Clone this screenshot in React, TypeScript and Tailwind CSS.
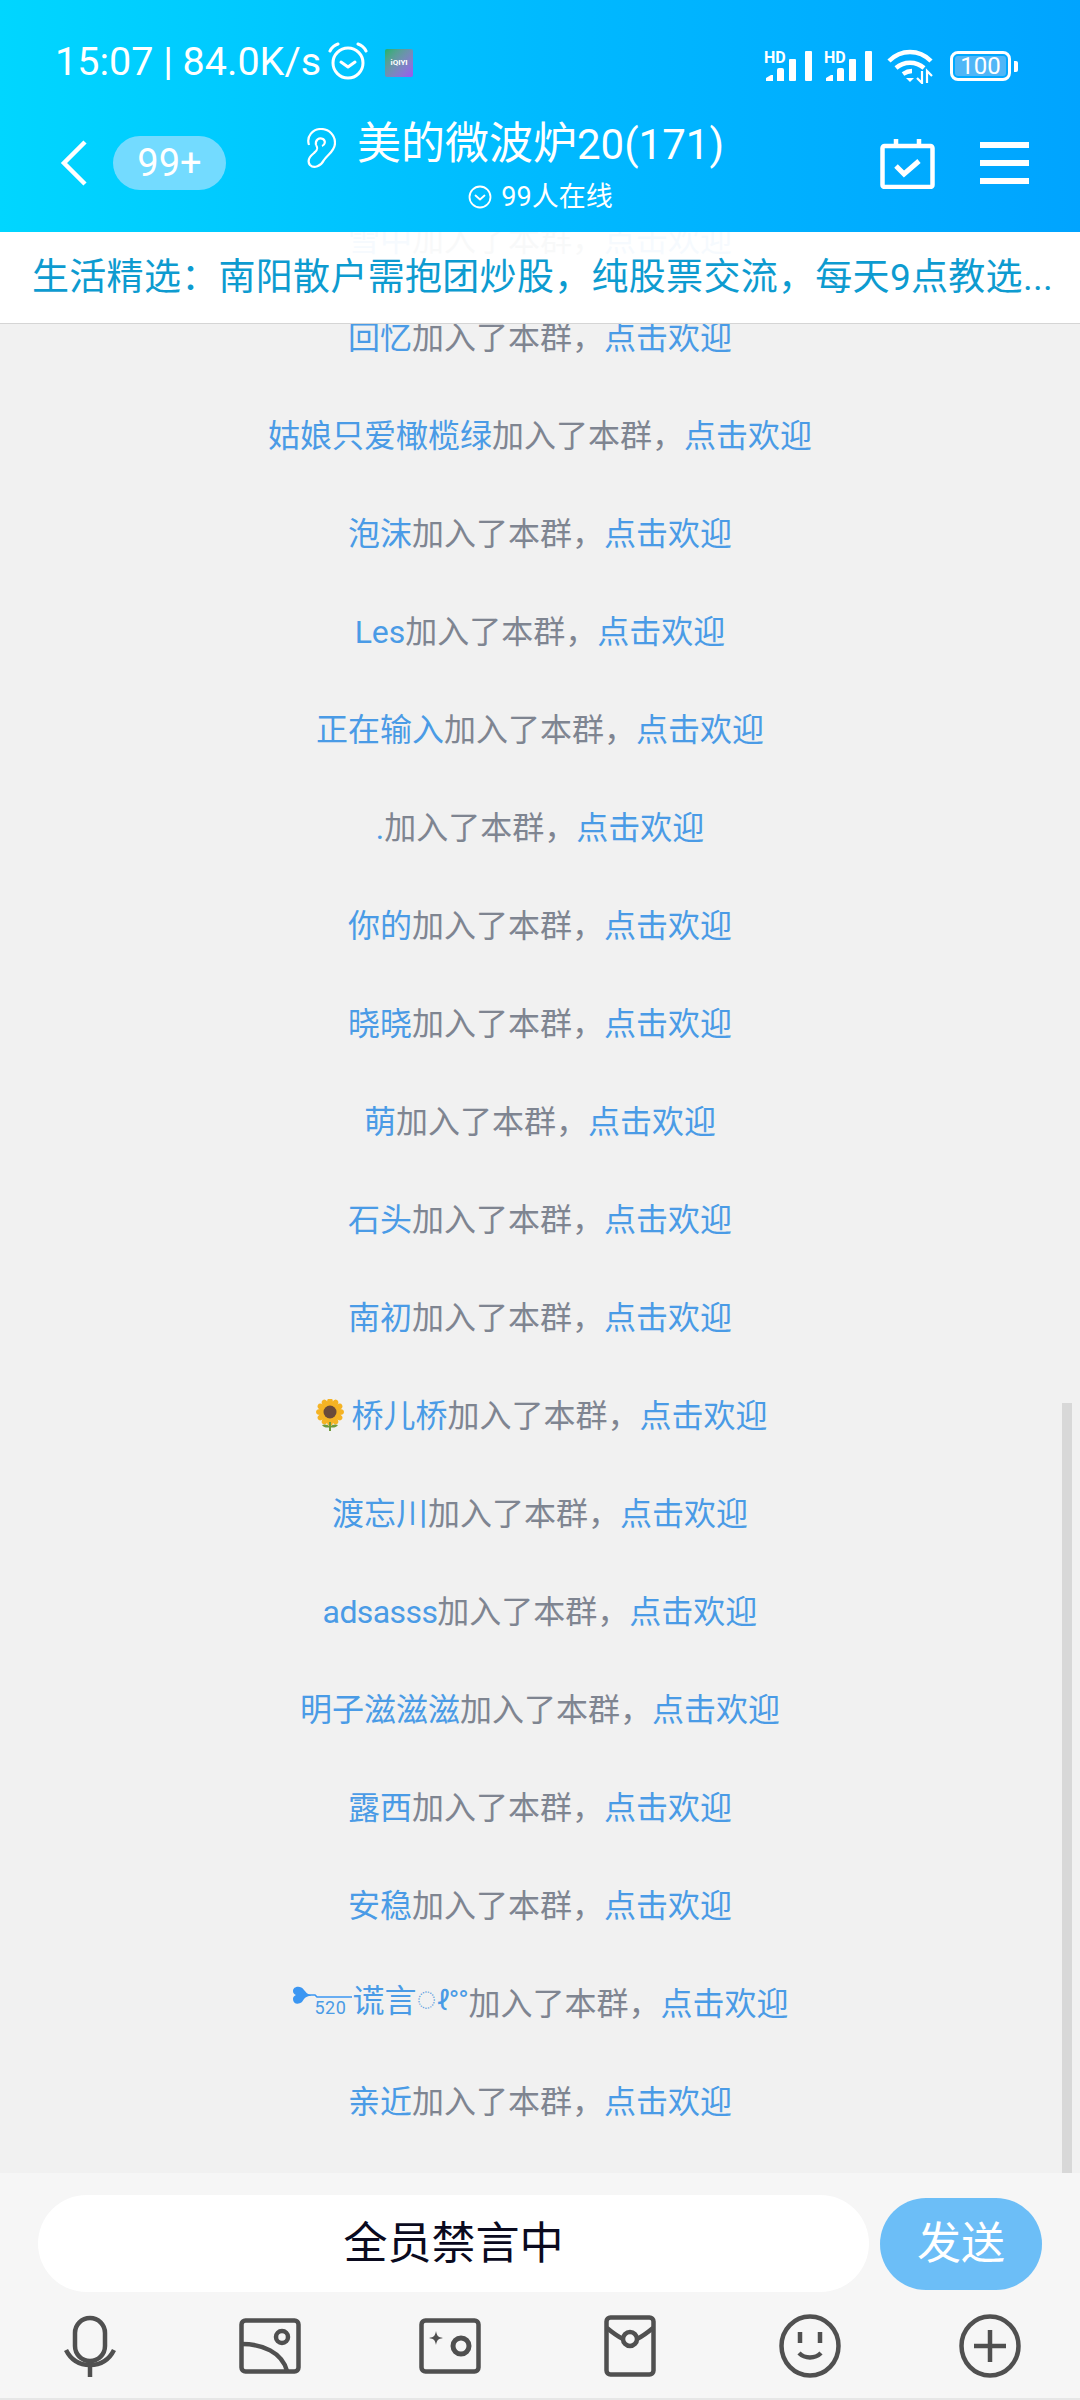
import type { ReactNode } from 'react';

const font = 'font-[Roboto,"Noto_Sans_CJK_SC",sans-serif]';

function Sunflower() {
  return (
    <svg width="33" height="34" viewBox="-5 0 33 34" className="mr-[6px]">
      <g fill="#f5b324">
        {[0, 30, 60, 90, 120, 150, 180, 210, 240, 270, 300, 330].map((a) => (
          <ellipse key={a} cx="13" cy="3.5" rx="3" ry="4.5" transform={`rotate(${a} 13 13)`} />
        ))}
      </g>
      <circle cx="13" cy="13" r="6.5" fill="#6b4a3a" />
      <path d="M13 23v9" stroke="#6f9a3a" strokeWidth="2" />
      <path d="M13 28c-2-3-6-3-8-2 2 3 6 3 8 2zM13 28c2-3 6-3 8-2-2 3-6 3-8 2z" fill="#6f9a3a" />
    </svg>
  );
}

function KeyName() {
  return (
    <span className="inline-flex items-center">
      <span className="relative w-[61px] h-[34px]">
        <svg width="61" height="34" viewBox="0 0 61 34" className="absolute left-0 top-0">
          <path d="M2 7c0-5 8-6 11-1 2 2 3 4 6 5 2 1 0 1-1 1-4 1-5 3-7 6-4 3-9 2-9-3 0-3 3-4 3-4s-3-1-3-4z" fill="#3b96f2" />
          <path d="M16 11h8l2 2h35" stroke="#3b96f2" strokeWidth="1.6" fill="none" />
        </svg>
        <span className="absolute left-[23px] top-[14px] text-[18px] leading-[20px] tracking-[0.5px]">520</span>
      </span>
      谎言
    </span>
  );
}

type Row = { name: ReactNode; icon?: ReactNode };

const rows: Row[] = [
  { name: '雪中' },
  { name: '回忆' },
  { name: '姑娘只爱橄榄绿' },
  { name: '泡沫' },
  { name: 'Les' },
  { name: '正在输入' },
  { name: '.' },
  { name: '你的' },
  { name: '晓晓' },
  { name: '萌' },
  { name: '石头' },
  { name: '南初' },
  { name: '桥儿桥', icon: <Sunflower /> },
  { name: '渡忘川' },
  { name: <span className="tracking-[-0.6px]">adsasss</span> },
  { name: '明子滋滋滋' },
  { name: '露西' },
  { name: '安稳' },
  {
    name: (
      <span className="inline-flex items-center">
        <KeyName />
        <span className="w-[20px] text-center text-[18px] text-[#5b9fe0]">◌</span>
        <span className="w-[32px] text-[28px] tracking-[-1px]">ℓ°°</span>
      </span>
    ),
  },
  { name: '亲近' },
];

function SignalBars() {
  return (
    <svg width="50" height="36" viewBox="0 -6 50 36">
      <text x="0" y="12" fontSize="16" fontWeight="700" fill="#fff" fontFamily="Roboto, sans-serif">HD</text>
      <g fill="#fff">
        <path d="M2 30v-3l5-3h2v6zM13 30V19a2 2 0 0 1 2-2h3a2 2 0 0 1 2 2v11z" />
        <rect x="25" y="8" width="7" height="22" rx="1" />
        <rect x="41" y="0" width="7" height="30" rx="1" />
      </g>
    </svg>
  );
}

function StatusBar() {
  return (
    <div className="h-[104px] flex items-start pt-[42px] pl-[55px] pr-[62px] text-white">
      <span className="text-[39.5px] leading-[40px] whitespace-nowrap">15:07 | 84.0K/s</span>
      <svg width="40" height="38" viewBox="0 0 40 38" fill="none" stroke="#fff" strokeWidth="3" className="ml-[7px] shrink-0">
        <circle cx="20" cy="21" r="15" />
        <path d="M13 20l7 5 7-5" strokeLinecap="round" strokeLinejoin="round" />
        <path d="M2 9c2-4 5-6 8-7M38 9c-2-4-5-6-8-7" strokeLinecap="round" />
      </svg>
      <div className="ml-[17px] mt-[7px] w-[28px] h-[28px] rounded-[2px] bg-gradient-to-br from-[#14b26a] to-[#9a55f0] flex items-center justify-center text-[8px] leading-none font-bold">
        iQIYI
      </div>
      <div className="ml-auto flex items-center">
        <div className="flex gap-[10px]">
          <SignalBars />
          <SignalBars />
        </div>
        <svg width="48" height="36" viewBox="0 0 48 36" fill="none" stroke="#fff" strokeWidth="4.5" className="ml-[13px] mt-[6px]">
          <path d="M2 13c12-12 30-12 42 0M9 20c8-7 20-7 28 0M16 26c3-2 6-3 9-3" />
          <path d="M19 30l4 4 4-4z" fill="#fff" stroke="none" />
          <path d="M35 23v12l-5-5M40 35V23l5 5" strokeWidth="2.2" />
        </svg>
        <div className="ml-[15px] mt-[6px] flex items-center">
          <div className="w-[61px] h-[30px] border-[3px] border-white rounded-[8px] p-[2px]">
            <div className="h-full bg-[#4fb6f7] rounded-[3px] text-[24px] leading-[20px] text-center">100</div>
          </div>
          <div className="w-[4px] h-[11px] bg-white rounded-r-[2px] ml-[3px]" />
        </div>
      </div>
    </div>
  );
}

function NavBar() {
  return (
    <div className="h-[128px] flex items-start text-white">
      <div className="w-[306px] pl-[60px] flex items-center gap-[25px] pt-[32px] shrink-0">
        <svg width="28" height="48" viewBox="0 0 28 48" fill="none" stroke="#fff" strokeWidth="4.5">
          <path d="M25 3L4 24l21 21" />
        </svg>
        <div className="w-[113px] h-[54px] rounded-full bg-[#73dbff] flex items-center justify-center text-[38px] leading-none">99+</div>
      </div>
      <svg width="30" height="40" viewBox="0 0 30 40" fill="none" stroke="#fff" strokeWidth="2.2" className="mt-[24px] shrink-0">
        <path d="M3 17C0 8 7 1 15 1c8 0 14 6 14 14 0 8-7 11-11 17-3 6-10 9-14 5-3-4-1-8 4-12 4-3 4-5 2-8" />
        <path d="M10 17c-1-5 3-8 7-6 3 2 2 6-1 7" />
      </svg>
      <div className="ml-[22px] w-[365px] flex flex-col items-center shrink-0">
        <span className="text-[44px] leading-[60px] mt-[10px] whitespace-nowrap">
          美的微波炉<span className="text-[42px]">20(171)</span>
        </span>
        <div className="flex items-center gap-[9px] mt-[7px]">
          <svg width="24" height="24" viewBox="0 0 24 24" fill="none" stroke="#fff" strokeWidth="1.8">
            <circle cx="12" cy="12" r="10.5" />
            <path d="M7.5 10.5l4.5 4 4.5-4" strokeLinecap="round" strokeLinejoin="round" />
          </svg>
          <span className="text-[27px] leading-[30px] whitespace-nowrap">99人在线</span>
        </div>
      </div>
      <div className="ml-auto pr-[51px] flex items-start gap-[45px] pt-[35px]">
        <svg width="55" height="50" viewBox="0 0 55 50" fill="none" stroke="#fff" strokeWidth="4.5">
          <rect x="2.5" y="7" width="50" height="41" rx="2" />
          <path d="M16 0v7M39 0v7" />
          <path d="M16 27l8 8 15-13" strokeWidth="5" />
        </svg>
        <div className="w-[49px] flex flex-col gap-[12px] pt-[3px]">
          <div className="h-[6px] bg-white" />
          <div className="h-[6px] bg-white" />
          <div className="h-[6px] bg-white" />
        </div>
      </div>
    </div>
  );
}

const iconStroke = { fill: 'none', stroke: '#505050', strokeWidth: 4.5 };

function Toolbar() {
  return (
    <div className="grid grid-cols-6 justify-items-center items-center mt-[21px] h-[66px]">
      <svg width="52" height="62" viewBox="0 0 52 62" {...iconStroke}>
        <rect x="11" y="3" width="30" height="43" rx="15" />
        <path d="M2 35c5 10 13 15 24 15s19-5 24-15" />
        <path d="M26 50v12" />
      </svg>
      <svg width="62" height="56" viewBox="0 0 62 56" {...iconStroke}>
        <rect x="2.5" y="2.5" width="57" height="51" rx="4" />
        <path d="M3 26c20 0 40 8 45 27" />
        <circle cx="43" cy="19" r="6" />
      </svg>
      <svg width="62" height="56" viewBox="0 0 62 56" {...iconStroke}>
        <rect x="2.5" y="2.5" width="57" height="51" rx="4" />
        <circle cx="42" cy="28" r="8" strokeWidth="5" />
        <path d="M17 13c1 5 2 6 7 7-5 1-6 2-7 7-1-5-2-6-7-7 5-1 6-2 7-7z" fill="#505050" stroke="none" />
      </svg>
      <svg width="52" height="62" viewBox="0 0 52 62" {...iconStroke}>
        <rect x="2.5" y="2.5" width="47" height="57" rx="4" />
        <path d="M3 13c6 5 12 9 16 11M49 13c-6 5-12 9-16 11" />
        <circle cx="26" cy="24" r="7" />
      </svg>
      <svg width="62" height="64" viewBox="0 0 62 64" {...iconStroke}>
        <ellipse cx="31" cy="32" rx="28.5" ry="29.5" />
        <path d="M21 18v11M41 18v11" />
        <path d="M20 39c6 6 16 6 22 0" />
      </svg>
      <svg width="62" height="64" viewBox="0 0 62 64" {...iconStroke}>
        <ellipse cx="31" cy="32" rx="28.5" ry="29.5" />
        <path d="M15 32h32M31 16v32" />
      </svg>
    </div>
  );
}

export default function App() {
  return (
    <div className={`w-[1080px] h-[2400px] flex flex-col overflow-hidden bg-[#f1f1f1] ${font}`}>
      <header className="h-[232px] shrink-0 bg-gradient-to-r from-[#00d6ff] via-[#00baff] to-[#00a4ff]">
        <StatusBar />
        <NavBar />
      </header>

      <main className="relative flex-1 min-h-0 overflow-hidden">
        <div className="-mt-[41px] flex flex-col">
          {rows.map((row, i) => (
            <div key={i} className="h-[98px] flex items-center justify-center text-[32px] leading-[40px] text-[#7f8591] whitespace-nowrap">
              {row.icon}
              <span className="text-[#4a9be6]">{row.name}</span>
              <span>加入了本群，</span>
              <span className="text-[#4a9be6]">点击欢迎</span>
            </div>
          ))}
        </div>
        {/* pinned notice */}
        <div className="absolute left-0 right-0 top-0 h-[92px] bg-white/95 border-b border-[#d5d5d5] pl-[32px] flex items-center text-[37px] tracking-[0.3px] text-[#0d9bd0] whitespace-nowrap">
          生活精选：南阳散户需抱团炒股，纯股票交流，每天9点教选...
        </div>
        {/* scrollbar */}
        <div className="absolute right-[8px] bottom-0 w-[10px] h-[770px] bg-[#d8d8d8]" />
      </main>

      <footer className="h-[227px] shrink-0 bg-[#f6f6f6] border-b-2 border-[#e6e6e6] pt-[22px]">
        <div className="flex items-center pl-[38px] gap-[11px]">
          <div className="w-[831px] h-[97px] rounded-full bg-white flex items-center justify-center text-[44px] text-[#0a0a1e]">全员禁言中</div>
          <div className="w-[162px] h-[92px] rounded-full bg-[#6cbef7] flex items-center justify-center text-[44px] text-white">发送</div>
        </div>
        <Toolbar />
      </footer>
    </div>
  );
}
